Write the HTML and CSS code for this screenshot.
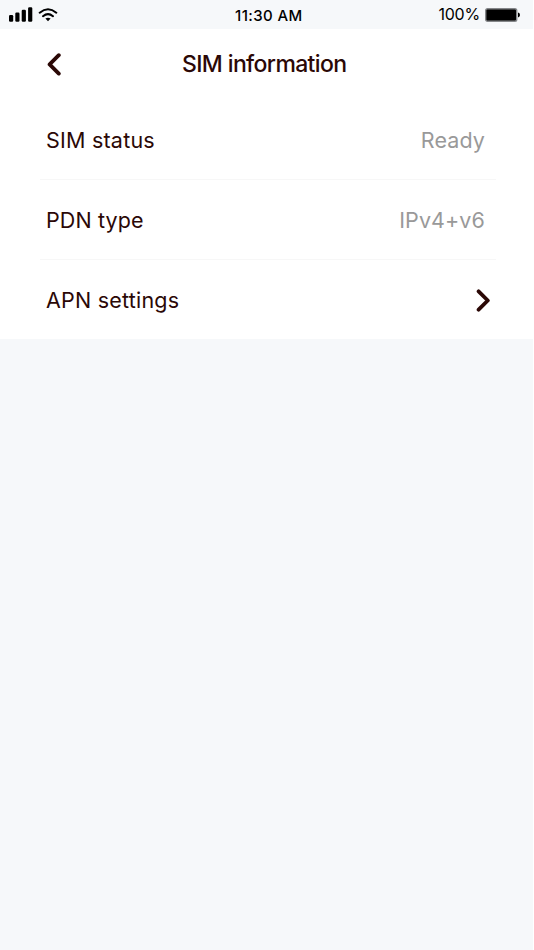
FILE: index.html
```html
<!DOCTYPE html>
<html lang="en">
<head>
<meta charset="utf-8">
<title>SIM information</title>
<link rel="stylesheet" href="styles.css">
</head>
<body>
<div class="screen">
  <div class="status-bar">
    <div class="status-left">
      <svg class="signal" width="24" height="15" viewBox="0 0 24 15"><rect x="0" y="8" width="4.2" height="6.8" rx="1.2"/><rect x="6.3" y="5.6" width="4.2" height="9.2" rx="1.2"/><rect x="12.7" y="2.8" width="4.2" height="12" rx="1.2"/><rect x="19.1" y="0.2" width="4.2" height="14.6" rx="1.2"/></svg>
      <svg class="wifi" width="20" height="14" viewBox="0 0 20 14"><path d="M1.7 4.7Q10-2.1 18.3 4.7M5 8.2Q10 4 15 8.2" fill="none" stroke="#000" stroke-width="2" stroke-linecap="round"/><path d="M7.4 10.6Q10 8.7 12.6 10.6L10 13.2Z"/></svg>
    </div>
    <div class="clock">11:30 AM</div>
    <div class="status-right">
      <span class="percent">100%</span>
      <svg class="battery" width="36" height="14" viewBox="0 0 36 14"><rect x=".7" y=".7" width="31" height="12.6" rx="1.8" fill="#000" stroke="#85878a" stroke-width="1.4"/><path d="M33 4.6Q35 5 35 7T33 9.4Z"/></svg>
    </div>
  </div>
  <header class="title-bar">
    <svg class="back" width="14" height="24" viewBox="0 0 14 24"><path d="M11.8 2.2 2.6 11.4 11.8 20.6"/></svg>
    <h1 class="title">SIM information</h1>
  </header>
  <main class="list">
    <div class="row"><span class="label">SIM status</span><span class="value">Ready</span></div>
    <div class="row"><span class="label compact">PDN type</span><span class="value">IPv4+v6</span></div>
    <div class="row"><span class="label">APN settings</span><svg class="next" width="16" height="24" viewBox="0 0 16 24"><path d="M3.6 3.3 12.8 12.5 3.6 21.7"/></svg></div>
  </main>
</div>
</body>
</html>
```
FILE: styles.css
```css
body {
  margin: 0;
  background: #fff;
  font-family: Inter, sans-serif;
  color: #2b0806;
}
.screen {
  width: 533px;
  height: 950px;
  background: #f6f8fa;
}
.status-bar {
  display: grid;
  grid-template-columns: 226px auto 1fr;
  align-items: center;
  height: 29px;
  padding: 0 12px 0 9px;
  box-sizing: border-box;
  color: #000;
}
.status-left, .status-right {
  display: flex;
  align-items: center;
}
.status-left { gap: 5px; }
.status-right {
  justify-content: flex-end;
  gap: 5px;
}
.clock {
  font-size: 15px;
  font-weight: 500;
  letter-spacing: 0.4px;
  padding-top: 1px;
}
.percent {
  font-size: 16px;
  font-weight: 400;
  letter-spacing: -0.2px;
  line-height: 20px;
  padding-bottom: 1px;
}
.title-bar {
  display: grid;
  grid-template-columns: 135px auto 1fr;
  align-items: center;
  height: 71px;
  padding-left: 47px;
  background: #fff;
}
.title {
  margin: 0;
  padding-bottom: 1px;
  font-size: 23px;
  font-weight: 500;
  letter-spacing: -0.63px;
  line-height: 28px;
}
.back, .next {
  display: block;
  fill: none;
  stroke: #2b0806;
  stroke-width: 3.8;
  stroke-linecap: round;
  stroke-linejoin: round;
}
.list {
  height: 239px;
  padding: 0 37px 0 40px;
  background: #fff;
}
.row {
  display: flex;
  align-items: center;
  justify-content: space-between;
  height: 80px;
  box-sizing: border-box;
  padding: 1px 11px 0 6px;
  border-bottom: 1px solid #f7f7f7;
  font-size: 21.5px;
  font-weight: 400;
}
.row:last-child {
  height: 79px;
  padding-right: 5px;
  border-bottom: 0;
}
.label { letter-spacing: 0.22px; }
.compact { letter-spacing: 0.1px; }
.value {
  color: #999;
  letter-spacing: 0.1px;
}
```
